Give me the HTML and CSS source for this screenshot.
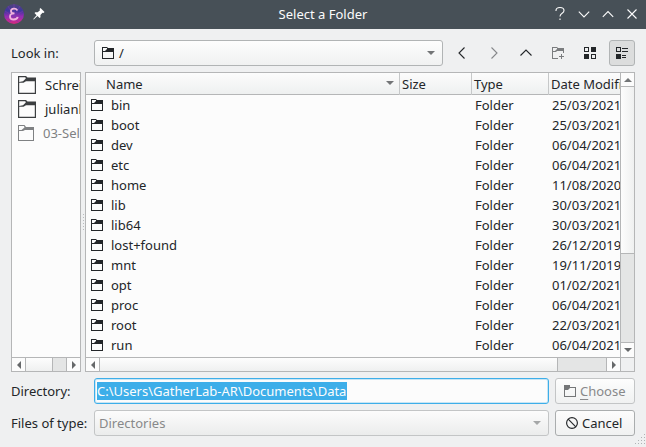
FILE: index.html
```html
<!DOCTYPE html>
<html lang="en">
<head>
<meta charset="utf-8">
<title>Select a Folder</title>
<link rel="stylesheet" href="styles.css">
</head>
<body>
<svg class="defs" width="0" height="0">
  <symbol id="folder" viewBox="0 0 12 12"><path fill="currentColor" d="M0 0H5L6 1H12V12H0ZM1 1V4H3L5 2V1ZM1 5V11H11V5Z" fill-rule="evenodd"/></symbol>
  <symbol id="place" viewBox="0 0 18 18"><path fill="currentColor" fill-rule="evenodd" d="M0 0H8L9.500 1.500H18V18H0ZM1.200 1.200V6L5 5.200L7.800 2.500L7.300 1.200ZM1.200 6.700V16.800H16.800V5.300H8L5.500 6.700Z"/></symbol>
  <symbol id="place-gone" viewBox="0 0 16 16"><path fill="currentColor" fill-rule="evenodd" d="M0 0H6.500L8 2H16V16H0ZM1 1V5H3.500L6.500 2.500L6 1ZM1 6V15H15V5H7L5 6Z"/></symbol>
</svg>
<div class="window">
  <header class="titlebar">
    <svg class="logo" width="20" height="20" viewBox="0 0 20 20">
      <defs><linearGradient id="g" x1="0" y1="0" x2="0" y2="1"><stop offset="0" stop-color="#51437d"/><stop offset=".35" stop-color="#4035a0"/><stop offset=".65" stop-color="#a02bb5"/><stop offset="1" stop-color="#d52a7c"/></linearGradient></defs>
      <circle cx="10" cy="10" r="10" fill="url(#g)"/>
      <path d="M10 13L1 7M10 13L4 2M10 13V0M10 13L16 2M10 13L19 7M10 13L1 14M10 13L19 14M10 13L5 19M10 13L15 19" stroke="#7d3cae" stroke-width=".8" opacity=".7"/>
      <path d="M13.200 6.500C12.500 3.800 7 3.900 7 7C7 8.700 8.500 9.400 10.500 9.400C8 9.400 6 10.500 6 12.700C6 16.500 13.200 16.300 13.700 12.900" fill="none" stroke="#efb3dd" stroke-width="1.800"/>
    </svg>
    <svg class="pin" width="12" height="12" viewBox="0 0 12 12"><path fill="#fff" d="M7.500 0L11.500 4L10.500 5L9.500 4.700L7.400 7L7.500 9.300L6.600 10L4.500 8L1 11.300L.3 11.500L.5 10.800L3.600 7.200L1.500 5L2.300 4.200L4.700 4.300L7 2.200L6.600 1Z"/></svg>
    <h1>Select a Folder</h1>
    <div class="controls">
      <svg width="12" height="16" viewBox="0 0 12 16"><path d="M2 5V4.500C2 2.500 3.500 1.500 6 1.500S10 2.800 10 4.500C10 7.500 6 7 6 10.500" /><path d="M6 12.500V14"/></svg>
      <svg width="12" height="16" viewBox="0 0 12 16"><path d="M.8 5.700L6 10.900L11.200 5.700"/></svg>
      <svg width="12" height="16" viewBox="0 0 12 16"><path d="M.8 10.800L6 5.600L11.200 10.800"/></svg>
      <svg width="12" height="16" viewBox="0 0 12 16"><path d="M1.500 3.500L10.500 12.500M10.500 3.500L1.500 12.500"/></svg>
    </div>
  </header>
  <main>
    <div class="row lookin">
      <label>Look in:</label>
      <div class="combo"><svg class="ic" width="12" height="12"><use href="#folder"/></svg><span class="grow">/</span><i class="down"></i></div>
      <div class="tool"><svg width="16" height="16" viewBox="0 0 16 16"><path d="M10.500 2.500L5 8L10.500 13.500"/></svg></div>
      <div class="tool dim"><svg width="16" height="16" viewBox="0 0 16 16"><path d="M5.500 2.500L11 8L5.500 13.500"/></svg></div>
      <div class="tool"><svg width="16" height="16" viewBox="0 0 16 16"><path d="M2.500 10.500L8 5L13.500 10.500"/></svg></div>
      <div class="tool dim"><svg width="16" height="16" viewBox="0 0 16 16"><path class="solid" fill-rule="evenodd" d="M2 2H7L8 3H14V8H13V6H7L6 7H3V13H8V14H2ZM3 3V6H5L7 4V3ZM11 9H12V11H14V12H12V14H11V12H9V11H11Z"/></svg></div>
      <div class="tool"><svg width="16" height="16" viewBox="0 0 16 16"><path class="solid" fill-rule="evenodd" d="M2 2H7V7H2ZM3 3V6H6V3ZM9 2H14V7H9ZM2 9H7V14H2ZM9 9H14V14H9ZM10 10V13H13V10Z"/></svg></div>
      <div class="tool on"><svg width="16" height="16" viewBox="0 0 16 16"><path class="solid" fill-rule="evenodd" d="M2 2H7V7H2ZM3 3V6H6V3ZM8 3H14V4H8ZM8 6H14V7H8ZM2 9H7V14H2ZM8 10H12V11H8ZM8 12H12V13H8Z"/></svg></div>
    </div>
    <div class="panes">
      <section class="places">
        <div class="placelist">
          <div class="place"><svg width="18" height="18"><use href="#place"/></svg><span>Schreibtisch</span></div>
          <div class="place"><svg width="18" height="18"><use href="#place"/></svg><span>julianh</span></div>
          <div class="place gone"><svg width="16" height="16"><use href="#place-gone"/></svg><span>03-Selection</span></div>
        </div>
        <div class="hbar"><b class="sb"><i class="al"></i></b><b class="handle ph"></b><b class="groove"></b><b class="sb"><i class="ar"></i></b></div>
      </section>
      <div class="splitter"></div>
      <section class="files">
        <div class="view">
          <div class="cols head"><span class="name">Name<i class="down"></i></span><span>Size</span><span>Type</span><span>Date Modified</span></div>
          <div class="list" id="list"></div>
        </div>
        <div class="vbar"><b class="sb"><i class="au"></i></b><b class="handle vh"></b><b class="groove"></b><b class="sb"><i class="ad"></i></b></div>
        <div class="hbar"><b class="sb"><i class="al"></i></b><b class="handle fh"></b><b class="groove"></b><b class="sb"><i class="ar"></i></b></div>
        <div class="corner"></div>
      </section>
    </div>
    <div class="row">
      <label>Directory:</label>
      <div class="input"><span>C:\Users\GatherLab-AR\Documents\Data</span></div>
      <div class="button disabled"><svg width="12" height="12" viewBox="0 0 12 12"><path fill="currentColor" fill-rule="evenodd" d="M0 0H6V2H12V12H0ZM1 5V11H11V3H6L4 5Z"/></svg><span><u>C</u>hoose</span></div>
    </div>
    <div class="row">
      <label>Files of type:</label>
      <div class="combo disabled"><span class="grow">Directories</span><i class="down"></i></div>
      <div class="button"><svg width="12" height="12" viewBox="0 0 12 12"><g fill="none" stroke="currentColor" stroke-width="1.150"><circle cx="6" cy="6" r="5.400"/><path d="M2.200 2.200L9.800 9.800"/></g></svg><span>Cancel</span></div>
    </div>
  </main>
  <svg class="grip" width="12" height="12" viewBox="0 0 12 12"><path fill="#b0b3b5" d="M10 0h1v1h-1zM7 3h1v1h-1zM10 3h1v1h-1zM4 6h1v1h-1zM7 6h1v1h-1zM10 6h1v1h-1zM1 9h1v1h-1zM4 9h1v1h-1zM7 9h1v1h-1zM10 9h1v1h-1z"/></svg>
</div>
<script src="script.js"></script>
</body>
</html>
```
FILE: styles.css
```css
* { box-sizing: border-box; }
body { margin: 0; font: 13px/20px "Noto Sans", sans-serif; color: #232629; }
svg { display: block; flex: none; }
.defs { position: absolute; }
.window { position: relative; width: 646px; height: 447px; overflow: hidden; background: #eff0f1; }
.titlebar { display: flex; align-items: center; height: 29px; padding: 0 8px 0 4px; background: #475057; color: #fcfcfc; }
.titlebar .logo { margin-top: -1px; }
.pin { margin: -2px 0 0 9px; }
h1 { flex: 1; margin: 0; font-size: 13px; font-weight: 400; line-height: 27px; text-align: center; padding-left: 47px; }
.controls { display: flex; gap: 12px; margin-top: -1px; }
.controls svg { fill: none; stroke: #fcfcfc; stroke-width: 1.1; }
main { display: flex; flex-direction: column; gap: 6px; padding: 11px 11px 0; }
.row { display: grid; grid-template-columns: 77px 455px 80px; gap: 6px; height: 26px; line-height: 26px; }
.row.lookin { grid-template-columns: 77px 349px repeat(6, 26px); }
label { white-space: nowrap; }
.combo, .button { display: flex; align-items: center; border: 1px solid #b1b4b5; border-radius: 3px; background: linear-gradient(#fdfdfd, #f0f1f1); }
.combo { padding: 0 7px; gap: 5px; }
.combo span, .button span { height: 24px; line-height: 24px; }
.combo.disabled { padding-left: 4px; border-color: #c3c5c6; background: linear-gradient(#fcfcfc, #ebecec); color: #88898a; }
.grow { flex: 1; }
.down { border: 4px solid transparent; border-top-color: #737577; border-bottom: 0; }
.disabled .down { border-top-color: #a5a7a8; }
.tool { display: grid; place-items: center; border-radius: 3px; }
.tool svg { fill: none; stroke: #232629; stroke-width: 1.1; }
.tool .solid { fill: #232629; stroke: none; }
.tool.dim svg { stroke: #85878a; }
.tool.dim .solid { fill: #7b7d7f; }
.tool.on { border: 1px solid #b1b4b5; background: #dcdddd; }
.button { gap: 4px; padding-left: 8px; border-color: #aaadae; }
.button svg { margin-left: 2px; }
.button:not(.disabled) { background: linear-gradient(#fcfcfc, #f0f1f1); }
.button.disabled { padding-left: 6px; border-color: #c3c5c6; color: #88898a; }
.button.disabled svg { color: #747678; }
u { text-underline-offset: 3px; text-decoration-thickness: 1px; }
.input { display: flex; align-items: center; padding: 0 2px; border: 1px solid #3daee9; border-radius: 3px; background: #fcfcfc; box-shadow: inset 0 0 0 1px #c8e5f4; }
.input span { height: 18px; line-height: 18px; background: #3daee9; color: #fcfcfc; white-space: nowrap; padding-right: 1px; }
.panes { display: grid; grid-template-columns: 70px 4px 550px; height: 300px; }
.places { display: flex; flex-direction: column; border: 1px solid #b5b6b7; background: #fcfcfc; overflow: hidden; }
.placelist { flex: 1; overflow: hidden; }
.place { display: flex; align-items: center; gap: 9px; height: 24px; padding-left: 6px; white-space: nowrap; }
.place svg { color: #3c3f41; }
.place.gone, .place.gone svg { color: #7f8183; }
.splitter { align-self: center; justify-self: center; width: 1px; height: 17px; background: repeating-linear-gradient(#b8babc 0 1px, transparent 1px 3px); }
.files { display: grid; grid-template: 284px 14px / 534px 14px; border: 1px solid #b5b6b7; background: #fcfcfc; }
.view { overflow: hidden; }
.cols { display: grid; grid-template-columns: 313px 72px 77px 120px; height: 20px; white-space: nowrap; }
.head { height: 22px; line-height: 22px; border-bottom: 1px solid #b5b6b7; background: linear-gradient(#fcfcfc, #eef0f0); }
.head span { padding-left: 2px; border-left: 1px solid #c6c8c9; }
.head .name { display: flex; justify-content: space-between; padding: 0 5px 0 20px; border: 0; }
.head .down { margin-top: 8px; }
.list { height: 262px; overflow: hidden; }
.list span { padding-left: 4px; }
.list .name { display: flex; align-items: center; gap: 8px; padding-left: 5px; }
.hbar, .vbar { display: flex; }
.hbar { height: 14px; border-top: 1px solid #b5b6b7; background: #fcfcfc; }
.vbar { flex-direction: column; border-left: 1px solid #b5b6b7; }
.sb { display: grid; place-items: center; flex: none; width: 13px; height: 13px; background: #fcfcfc; }
.hbar .sb { border: 0 solid #b5b6b7; }
.hbar .sb:first-child { width: 14px; border-right-width: 1px; }
.hbar .sb:last-child { width: 14px; border-left-width: 1px; }
.vbar .sb { border: 0 solid #b5b6b7; }
.vbar .sb:first-child { height: 14px; border-bottom-width: 1px; }
.vbar .sb:last-child { height: 15px; border-top-width: 1px; }
.handle { flex: none; background: linear-gradient(#fdfdfd, #eff0f0); border: 0 solid #b5b6b7; }
.hbar .handle { border-right-width: 1px; }
.ph { width: 27px; }
.fh { width: 458px; }
.vh { height: 167px; background: linear-gradient(90deg, #fdfdfd, #eff0f0); border-bottom-width: 1px; }
.groove { flex: 1; background: #e4e5e5; }
.al, .ar, .au, .ad { border: 4px solid transparent; }
.al { border-right-color: #66686a; border-left: 0; }
.ar { border-left-color: #66686a; border-right: 0; }
.au { border-bottom-color: #737577; border-top: 0; }
.ad { border-top-color: #66686a; border-bottom: 0; }
.corner { border: 1px solid #b5b6b7; border-width: 1px 0 0 1px; background: #eff0f1; }
.grip { position: absolute; right: 0; bottom: 1px; }
```
FILE: script.js
```js
const folders = [
  ['bin', '25/03/2021'], ['boot', '25/03/2021'], ['dev', '06/04/2021'], ['etc', '06/04/2021'],
  ['home', '11/08/2020'], ['lib', '30/03/2021'], ['lib64', '30/03/2021'], ['lost+found', '26/12/2019'],
  ['mnt', '19/11/2019'], ['opt', '01/02/2021'], ['proc', '06/04/2021'], ['root', '22/03/2021'], ['run', '06/04/2021']
];
document.getElementById('list').innerHTML = folders.map(([name, date]) =>
  `<div class="cols"><span class="name"><svg width="12" height="12"><use href="#folder"/></svg>${name}</span><span></span><span>Folder</span><span>${date}</span></div>`
).join('');
```
